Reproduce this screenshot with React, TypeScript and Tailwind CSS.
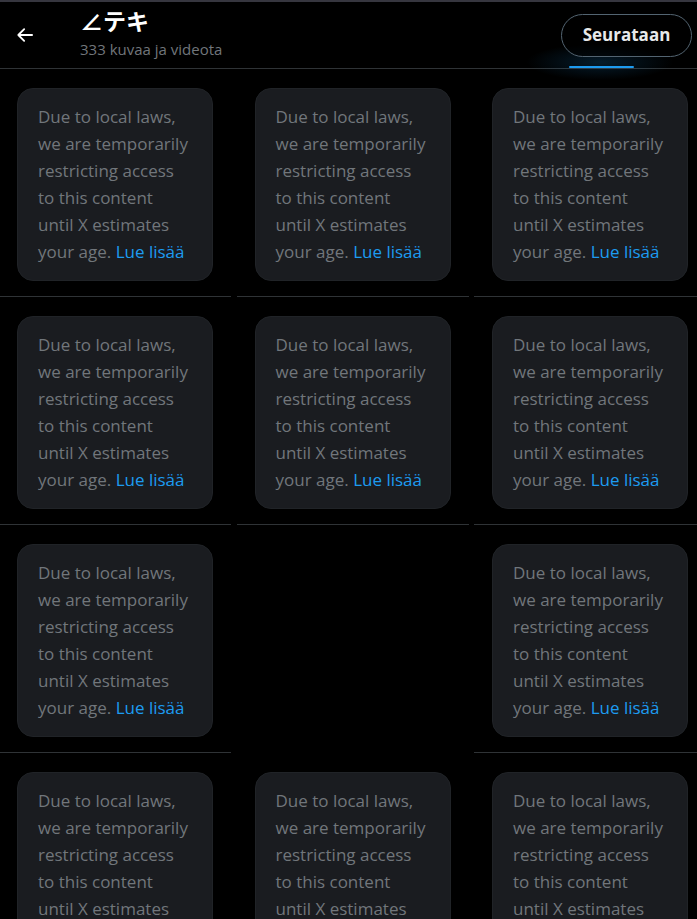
import React from "react";

const lines = [
  "Due to local laws,",
  "we are temporarily",
  "restricting access",
  "to this content",
  "until X estimates",
];

function Card() {
  return (
    <div className="w-[196px] h-[193px] rounded-[16px] bg-[#1a1c20] border border-[#202327] pl-[20px] pt-[14px]">
      <p className="text-[17px] leading-[27px] text-[#71767b] whitespace-nowrap">
        {lines.map((l) => (
          <span key={l} className="block">{l}</span>
        ))}
        <span className="block">
          your age. <span className="text-[#1d9bf0]">Lue lisää</span>
        </span>
      </p>
    </div>
  );
}

function Cell({ filled = true, line = true }: { filled?: boolean; line?: boolean }) {
  return (
    <div className={`h-[228px] flex justify-center pt-[19px] ${line ? "border-b border-[#2f3336]" : ""}`}>
      {filled ? <Card /> : null}
    </div>
  );
}

export default function App() {
  const rows = [
    [true, true, true],
    [true, true, true],
    [true, false, true],
    [true, true, true],
  ];
  return (
    <div
      className="w-[697px] h-[919px] overflow-hidden bg-black text-white"
      style={{ fontFamily: '"Open Sans", "Noto Sans", "Noto Sans CJK JP", sans-serif' }}
    >
      <div className="h-[2px] bg-[#36363f]" />
      <header className="relative h-[67px] border-b border-[#2f3336] flex items-center">
        <div className="w-[80px] pl-[15px] flex items-center">
          <svg width="20" height="20" viewBox="0 0 24 24" fill="none">
            <path d="M20.5 12H4M11 5l-7 7 7 7" stroke="white" strokeWidth="2.2" strokeLinecap="round" strokeLinejoin="round" />
          </svg>
        </div>
        <div className="flex flex-col -mt-[3px]">
          <div className="text-[23px] leading-[28px] font-bold -mt-[2px]" style={{ fontFamily: '"Noto Sans CJK JP", "Noto Sans", sans-serif' }}>
            ∠テキ
          </div>
          <div className="text-[15px] leading-[20px] text-[#71767b] mt-[5px]">333 kuvaa ja videota</div>
        </div>
        <div className="absolute left-[520px] top-[40px] w-[160px] h-[40px] rounded-full bg-[radial-gradient(ellipse_at_center,rgba(29,155,240,0.18),transparent_65%)]" />
        <div className="absolute left-[569px] bottom-[0px] w-[65px] h-[2px] rounded-full bg-[#1d9bf0]" />
        <button className="ml-auto mr-[5px] h-[43px] w-[131px] rounded-full border border-[#536471] bg-black/60 text-[17px] font-bold text-[#e7e9ea] relative">
          Seurataan
        </button>
      </header>
      <div className="w-[710px] -ml-[1px] grid grid-cols-[232px_232px_232px] gap-x-[5.5px]">
        {rows.map((r, i) =>
          r.map((f, j) => <Cell key={`${i}-${j}`} filled={f} line={f} />)
        )}
      </div>
    </div>
  );
}
